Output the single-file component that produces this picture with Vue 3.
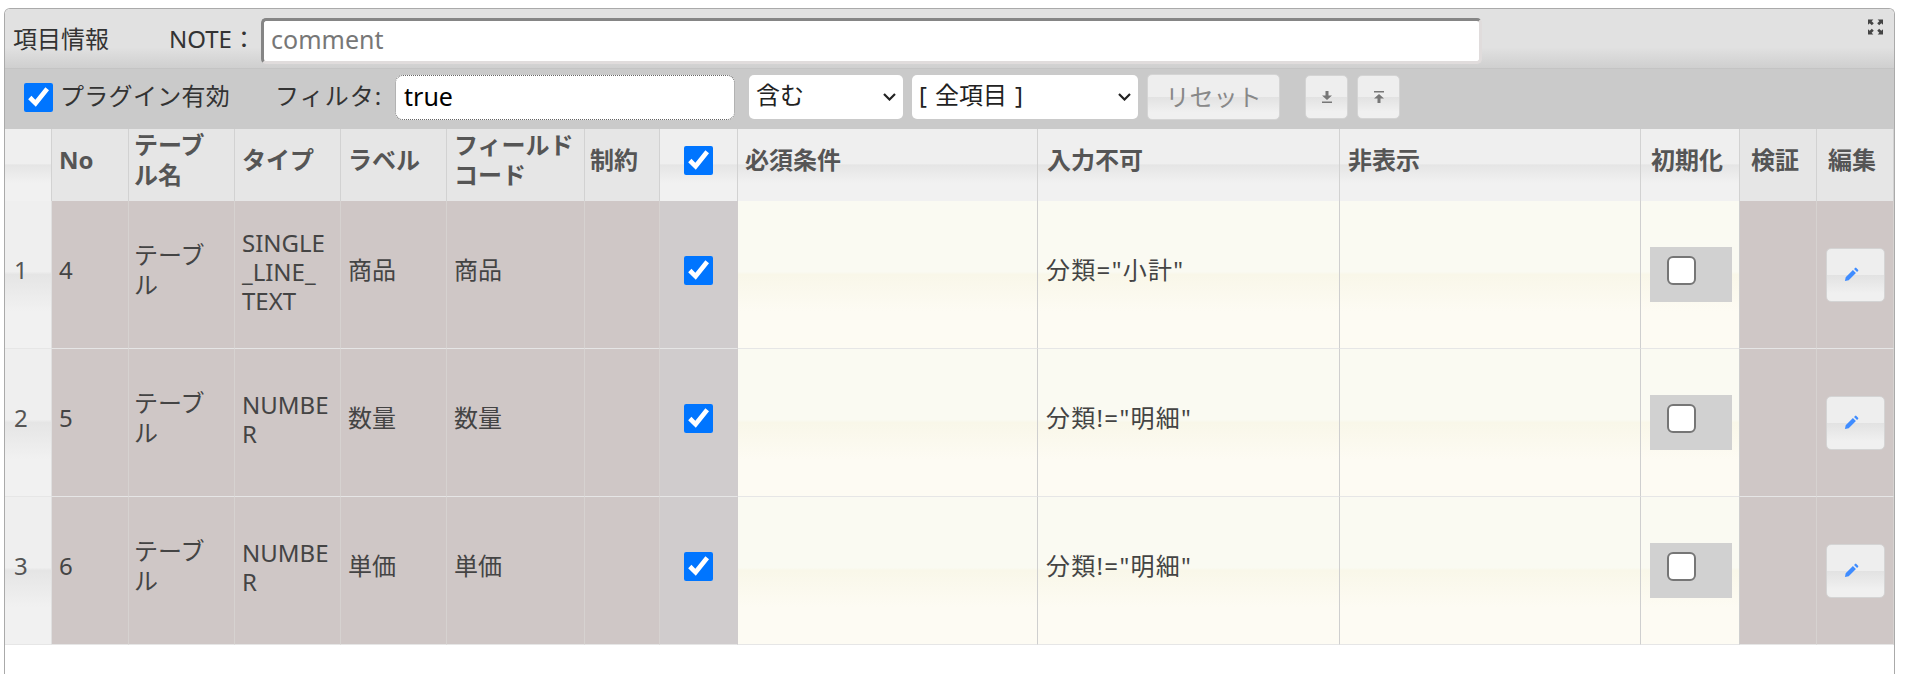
<script setup>
const columns = ['No', 'テーブル名', 'タイプ', 'ラベル', 'フィールドコード', '制約']
const rows = [
  { n: 1, no: 4, table: 'テーブル', type: 'SINGLE\n_LINE_\nTEXT', label: '商品', code: '商品', readonly: '分類="小計"' },
  { n: 2, no: 5, table: 'テーブル', type: 'NUMBE\nR', label: '数量', code: '数量', readonly: '分類!="明細"' },
  { n: 3, no: 6, table: 'テーブル', type: 'NUMBE\nR', label: '単価', code: '単価', readonly: '分類!="明細"' },
]
</script>

<template>
  <div class="panel">
    <div class="title-bar">
      <span class="title">項目情報</span>
      <label class="note-label">NOTE：</label>
      <input class="note-input" type="text" placeholder="comment" />
      <svg class="expand" viewBox="0 0 14 14" width="15" height="16" fill="#444">
        <path d="M0 0h5L3.400 1.600 5.400 3.600 3.600 5.400 1.600 3.400 0 5zM14 0v5l-1.600-1.600-2 2-1.800-1.800 2-2L9 0zM0 14V9l1.600 1.600 2-2 1.800 1.800-2 2L5 14zM14 14H9l1.600-1.600-2-2 1.800-1.800 2 2L14 9z" />
      </svg>
    </div>

    <div class="filter-bar">
      <input class="check plugin-check" type="checkbox" checked />
      <span class="plugin-label">プラグイン有効</span>
      <span class="filter-label">フィルタ:</span>
      <input class="filter-input" type="text" value="true" />
      <select class="select select-match"><option>含む</option></select>
      <select class="select select-field"><option>[&#8196;全項目&#8196;]</option></select>
      <button class="btn reset" type="button">リセット</button>
      <button class="btn icon-btn first-icon" type="button">
        <svg viewBox="0 0 12 14" width="12" height="14" fill="#777">
          <path d="M4.500 1h3v4.500H11L6 10 1 5.500h3.500zM1 11.500h10V13H1z" />
        </svg>
      </button>
      <button class="btn icon-btn" type="button">
        <svg viewBox="0 0 12 14" width="12" height="14" fill="#777">
          <path d="M1 1h10v1.500H1zM6 4l5 4.500H7.500V13h-3V8.500H1z" />
        </svg>
      </button>
    </div>

    <table class="grid">
      <colgroup>
        <col class="c-num" /><col class="c-no" /><col class="c-wide" /><col class="c-wide" /><col class="c-wide" />
        <col class="c-code" /><col class="c-limit" /><col class="c-check" /><col class="c-req" /><col class="c-ro" />
        <col class="c-hide" /><col class="c-init" /><col class="c-side" /><col class="c-side" />
      </colgroup>
      <thead>
        <tr>
          <th class="grad"></th>
          <th v-for="c in columns" :key="c" class="flat">{{ c }}</th>
          <th class="grad center"><input class="check" type="checkbox" checked /></th>
          <th class="grad">必須条件</th>
          <th class="grad pad-9">入力不可</th>
          <th class="grad pad-8">非表示</th>
          <th class="grad pad-10">初期化</th>
          <th class="flat pad-11">検証</th>
          <th class="flat pad-11">編集</th>
        </tr>
      </thead>
      <tbody>
        <tr v-for="r in rows" :key="r.n">
          <td class="grad num">{{ r.n }}</td>
          <td class="locked">{{ r.no }}</td>
          <td class="locked">{{ r.table }}</td>
          <td class="locked type-cell">{{ r.type }}</td>
          <td class="locked">{{ r.label }}</td>
          <td class="locked">{{ r.code }}</td>
          <td class="locked"></td>
          <td class="check-cell center"><input class="check" type="checkbox" checked /></td>
          <td class="edit"></td>
          <td class="edit readonly">{{ r.readonly }}</td>
          <td class="edit"></td>
          <td class="edit init-cell">
            <div class="init-box"><input class="check off" type="checkbox" /></div>
          </td>
          <td class="locked"></td>
          <td class="locked btn-cell">
            <button class="btn pencil-btn" type="button">
              <svg viewBox="0 0 16 16" width="15" height="15" fill="#3f8cff">
                <path d="M1 15l.8-4L9.500 3.300l3.200 3.200L5 14.200zM10.700 2.100l1.100-1.100a1 1 0 0 1 1.400 0l1.800 1.800a1 1 0 0 1 0 1.400l-1.100 1.100z" />
              </svg>
            </button>
          </td>
        </tr>
      </tbody>
    </table>
  </div>
</template>

<style scoped>
.panel {
  box-sizing: border-box;
  width: 1891px;
  height: 666px;
  margin: 8px 0 0 4px;
  border: 1px solid #aaa;
  border-bottom: 0;
  border-radius: 6px 6px 0 0;
  background: #fff;
  overflow: hidden;
  font-family: "Noto Sans", "Noto Sans CJK JP", sans-serif;
  font-size: 24px;
  color: #333;
}
.title-bar {
  position: relative;
  box-sizing: border-box;
  height: 60px;
  display: flex;
  align-items: center;
  padding: 0 0 2px 8px;
  border-bottom: 1px solid #c4c4c4;
  background: linear-gradient(#e1e1e1 0, #e1e1e1 65%, #cfcfcf 100%);
}
.title { width: 156px; }
.note-label { width: 92px; }
.note-input {
  box-sizing: border-box;
  width: 1221px;
  height: 46px;
  margin-top: 6px;
  padding: 0 7px 4px;
  border: 3px solid;
  border-color: #858585 #e0dcdc #e0dcdc #858585;
  border-radius: 5px;
  background: #fff;
  font: inherit;
  font-size: 25px;
  outline: none;
}
.note-input::placeholder { color: #777; opacity: 1; }
.expand { position: absolute; top: 10px; right: 11px; }

.filter-bar {
  box-sizing: border-box;
  height: 60px;
  display: flex;
  align-items: center;
  padding: 0 0 4px 19px;
  background: #cacaca;
}
.check {
  display: block;
  width: 29px;
  height: 29px;
  margin: 0;
}
.check.off {
  appearance: none;
  box-sizing: border-box;
  border: 2.500px solid #767676;
  border-radius: 6px;
  background: #fff;
}
.plugin-label { margin: 0 0 6px 7px; letter-spacing: .3px; }
.filter-label { margin: 0 0 6px 45px; letter-spacing: 1px; }
.filter-input {
  box-sizing: border-box;
  width: 340px;
  height: 45px;
  margin-left: 13px;
  padding: 0 8px 3px;
  border: 1px dotted #666;
  border-radius: 8px;
  background: #fff;
  font: inherit;
  font-size: 25px;
  color: #000;
  outline: none;
}
.select {
  appearance: none;
  box-sizing: border-box;
  height: 44px;
  padding: 0 24px 5px 7px;
  border: none;
  border-radius: 5px;
  background-color: #fff;
  background-image: url("data:image/svg+xml,%3Csvg xmlns='http://www.w3.org/2000/svg' width='13' height='8'%3E%3Cpath d='M1 1l5.500 5.500L12 1' fill='none' stroke='%23222' stroke-width='2.200'/%3E%3C/svg%3E");
  background-repeat: no-repeat;
  background-position: right 7px center;
  font: inherit;
  color: #222;
}
.select-match { width: 154px; margin-left: 14px; }
.select-field { width: 226px; margin-left: 9px; }
.btn {
  box-sizing: border-box;
  border: 1px solid #d4d4d4;
  border-radius: 5px;
  background: linear-gradient(#eeeeee 0, #eeeeee 50%, #e2e2e2 50%, #f0f0f0 85%, #f0f0f0 100%);
  font: inherit;
  color: #888;
  padding: 0;
  display: inline-flex;
  align-items: center;
  justify-content: center;
}
.reset { width: 133px; height: 46px; margin-left: 9px; padding-bottom: 4px; }
.icon-btn { width: 43px; height: 44px; margin-left: 9px; }
.first-icon { margin-left: 25px; }

.grid {
  width: 1889px;
  table-layout: fixed;
  border-collapse: separate;
  border-spacing: 0;
}
.c-num { width: 47px; }
.c-no { width: 77px; }
.c-wide { width: 106px; }
.c-code { width: 138px; }
.c-limit { width: 75px; }
.c-check { width: 78px; }
.c-req { width: 300px; }
.c-ro { width: 302px; }
.c-hide { width: 301px; }
.c-init { width: 99px; }
.c-side { width: 77px; }

th, td {
  box-sizing: border-box;
  padding: 0 7px 9px;
  line-height: 30px;
  text-align: left;
  word-break: break-all;
  border-right: 1px solid #d2d2d2;
  font-weight: 400;
  color: #444;
}
thead tr { height: 72px; }
tbody tr { height: 148px; }
th { font-weight: 700; color: #555; padding-bottom: 10px; }
td { border-bottom: 1px solid #e6e6e6; }
tr > :nth-child(3) { padding-left: 5px; }
th:nth-child(7) { padding-left: 5px; }
.pad-8 { padding-left: 8px; }
.pad-9 { padding-left: 9px; }
.pad-10 { padding-left: 10px; }
.pad-11 { padding-left: 11px; }
th.center, td.center { padding-left: 0; padding-right: 0; }
.center .check { margin: 0 auto; }
td.type-cell { white-space: pre-line; line-height: 29px; padding-bottom: 7px; }
.readonly { letter-spacing: 1.300px; padding-left: 8px; }
.grad {
  background: linear-gradient(#efefef 0, #efefef 48%, #e5e5e5 50%, #f1f1f1 75%, #f1f1f1 100%);
}
.flat { background: #e6e6e6; }
.num { color: #555; padding-left: 9px; border-right-color: #e0e0e0; }
.locked { background: #cfc7c6; border-right-color: #d6d2d0; }
.check-cell { background: #d0cccd; border-right-color: #d0cccd; }
.edit {
  background: linear-gradient(#fafaf2 0, #fafaf2 48%, #f9f7e9 50%, #fdfbf3 75%, #fdfbf3 100%);
  border-right-color: #cfcfcf;
}
td.init-cell { padding: 0 7px 0 9px; }
.init-box {
  box-sizing: border-box;
  height: 55px;
  padding: 9px 0 0 17px;
  background: #d1d1d1;
  display: flex;
}
td.btn-cell { padding: 0 8px 0 9px; }
.pencil-btn { width: 59px; height: 54px; vertical-align: middle; }
.pencil-btn svg { margin-right: 8px; }
</style>
